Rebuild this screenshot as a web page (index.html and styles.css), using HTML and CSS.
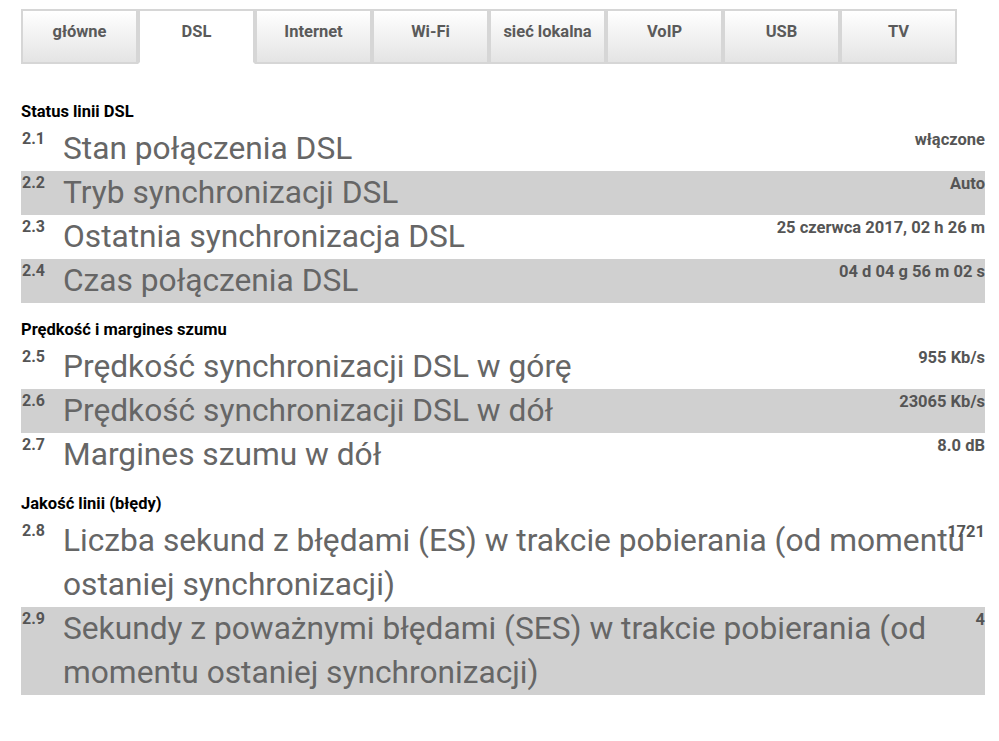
FILE: index.html
```html
<!DOCTYPE html>
<html lang="pl">
<head>
<meta charset="utf-8">
<title>DSL</title>
<link rel="stylesheet" href="styles.css">
</head>
<body>
<div class="page">
  <nav class="tabs">
    <div class="tab">główne</div>
    <div class="tab active">DSL</div>
    <div class="tab">Internet</div>
    <div class="tab">Wi-Fi</div>
    <div class="tab">sieć lokalna</div>
    <div class="tab">VoIP</div>
    <div class="tab">USB</div>
    <div class="tab">TV</div>
  </nav>

  <h2 class="section-title first">Status linii DSL</h2>
  <div class="row"><span class="num">2.1</span><span class="label">Stan połączenia DSL</span><span class="value">włączone</span></div>
  <div class="row alt"><span class="num">2.2</span><span class="label">Tryb synchronizacji DSL</span><span class="value">Auto</span></div>
  <div class="row"><span class="num">2.3</span><span class="label">Ostatnia synchronizacja DSL</span><span class="value">25 czerwca 2017, 02 h 26 m</span></div>
  <div class="row alt"><span class="num">2.4</span><span class="label">Czas połączenia DSL</span><span class="value">04 d 04 g 56 m 02 s</span></div>

  <h2 class="section-title">Prędkość i margines szumu</h2>
  <div class="row"><span class="num">2.5</span><span class="label">Prędkość synchronizacji DSL w górę</span><span class="value">955 Kb/s</span></div>
  <div class="row alt"><span class="num">2.6</span><span class="label">Prędkość synchronizacji DSL w dół</span><span class="value">23065 Kb/s</span></div>
  <div class="row"><span class="num">2.7</span><span class="label">Margines szumu w dół</span><span class="value">8.0 dB</span></div>

  <h2 class="section-title">Jakość linii (błędy)</h2>
  <div class="row"><span class="num">2.8</span><span class="label">Liczba sekund z błędami (ES) w trakcie pobierania (od momentu ostaniej synchronizacji)</span><span class="value">1721</span></div>
  <div class="row alt"><span class="num">2.9</span><span class="label">Sekundy z poważnymi błędami (SES) w trakcie pobierania (od momentu ostaniej synchronizacji)</span><span class="value">4</span></div>
</div>
</body>
</html>
```

FILE: styles.css
```css
html, body {
  margin: 0;
  padding: 0;
  background: #fff;
}

body {
  font-family: Roboto, "Liberation Sans", sans-serif;
}

.page {
  padding: 9px 14px 0 21px;
}

.tabs {
  display: flex;
  width: 936px;
}

.tab {
  width: 117px;
  box-sizing: border-box;
  height: 55px;
  padding-top: 11px;
  text-align: center;
  font-weight: 700;
  font-size: 16.5px;
  line-height: 20px;
  color: #5a5a5a;
  border: 2px solid #d6d6d6;
  background: linear-gradient(#ffffff, #e4e4e4);
}

.tab.active {
  background: #fff;
  border-bottom-color: transparent;
}

.section-title {
  margin: 18px 0 6px;
  font-size: 16.5px;
  line-height: 18px;
  font-weight: 700;
  color: #000;
}

.section-title.first {
  margin-top: 39px;
}

.row {
  display: grid;
  grid-template-columns: 42px 1fr;
  align-items: start;
}

.row.alt {
  background: #d0d0d0;
}

.num {
  grid-column: 1;
  grid-row: 1;
  padding: 2px 0 0 1px;
  font-size: 16px;
  line-height: 20px;
  font-weight: 700;
  color: #555;
}

.label {
  grid-column: 2;
  grid-row: 1;
  font-size: 31.7px;
  line-height: 44px;
  color: #666;
}

.value {
  grid-column: 2;
  grid-row: 1;
  justify-self: end;
  padding-top: 3px;
  font-size: 16.5px;
  line-height: 20px;
  font-weight: 700;
  color: #555;
}
```
